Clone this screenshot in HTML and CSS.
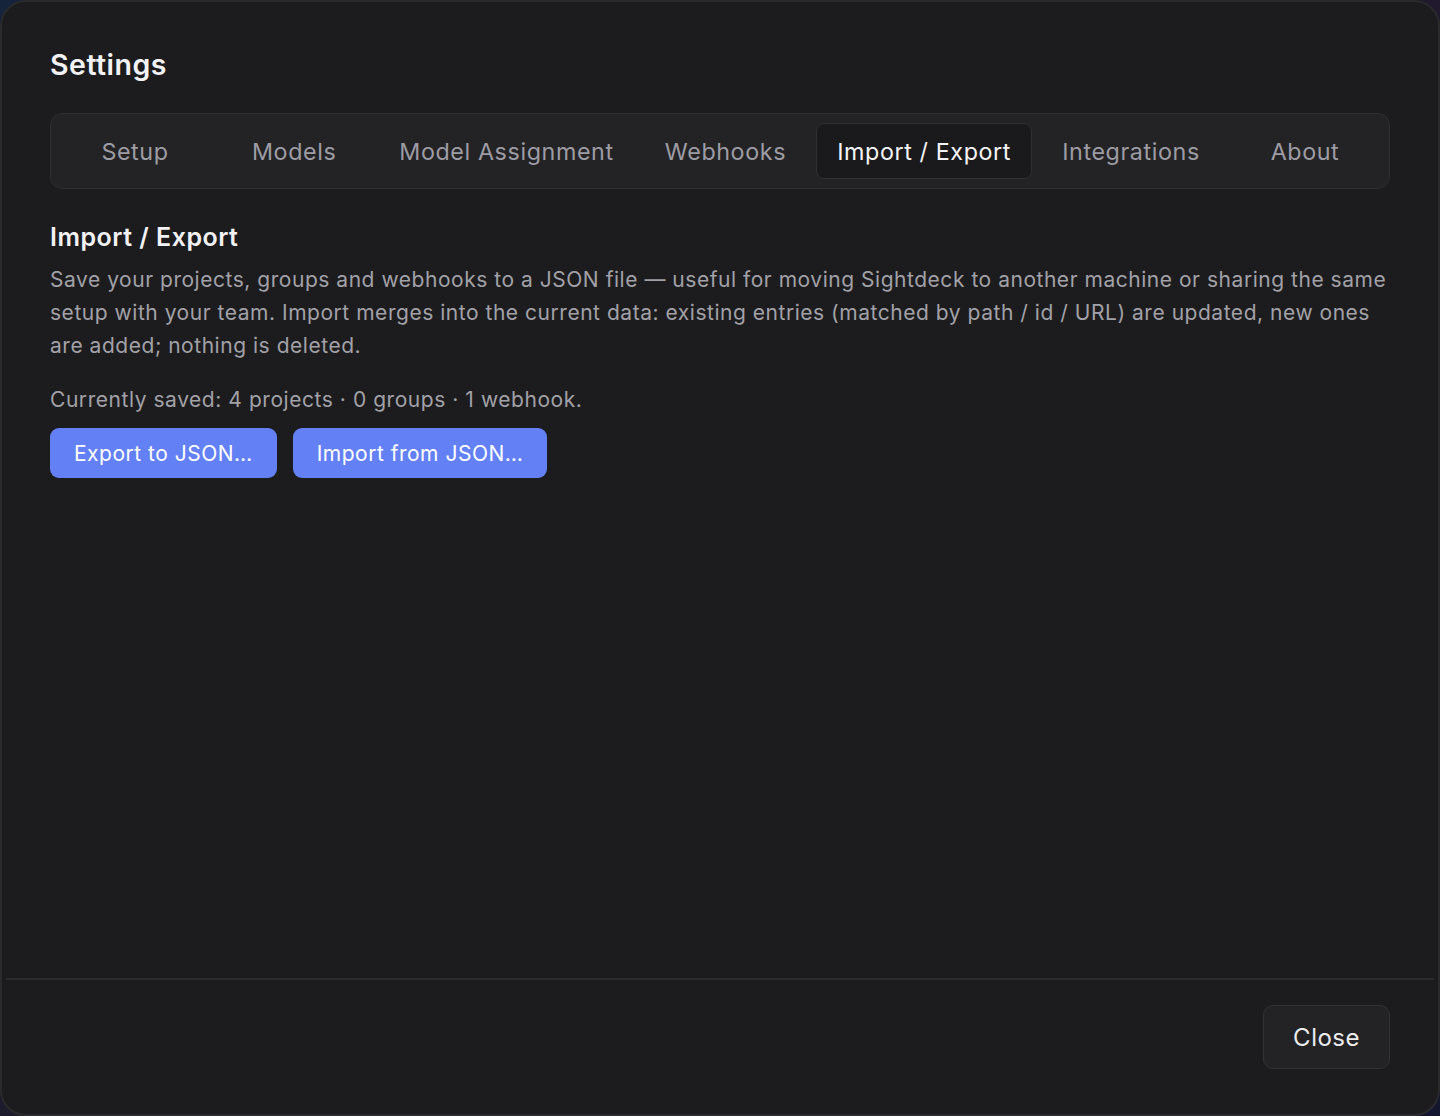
FILE: index.html
```html
<!DOCTYPE html>
<html>
<head>
  <meta charset="UTF-8" />
  <title>Settings</title>
  <link rel="stylesheet" href="styles.css">
</head>
<body>

<div class="modal">
  <div class="modal-body">
    <h2 class="title">Settings</h2>

    <div class="tabs">
      <button class="tab">Setup</button>
      <button class="tab">Models</button>
      <button class="tab">Model Assignment</button>
      <button class="tab">Webhooks</button>
      <button class="tab active">Import / Export</button>
      <button class="tab">Integrations</button>
      <button class="tab">About</button>
    </div>

    <div class="section">
      <h3>Import / Export</h3>
      <p class="desc">Save your projects, groups and webhooks to a JSON file — useful for moving Sightdeck to another machine or sharing the same setup with your team. Import merges into the current data: existing entries (matched by path / id / URL) are updated, new ones are added; nothing is deleted.</p>
      <p class="counts">Currently saved: 4 projects · 0 groups · 1 webhook.</p>
      <div class="actions">
        <button class="btn-primary">Export to JSON…</button>
        <button class="btn-primary">Import from JSON…</button>
      </div>
    </div>
  </div>

  <div class="modal-footer">
    <button class="btn-close">Close</button>
  </div>
</div>

</body>
</html>
```

FILE: styles.css
```css
html, body { height: 100%; }
body {
  margin: 0;
  font-family: Inter, "Noto Sans", sans-serif;
  letter-spacing: 0.5px;
  background: linear-gradient(135deg, #15243b 0%, #1e1a2a 50%, #2a1838 75%, #141630 100%);
  color: #ececee;
}
button { font-family: inherit; letter-spacing: inherit; cursor: pointer; }

.modal {
  box-sizing: border-box;
  height: 100vh;
  display: flex;
  flex-direction: column;
  background: #1c1c1e;
  border: 2px solid #2a2a2d;
  border-radius: 26px;
  overflow: hidden;
}
.modal-body { flex: 1; padding: 46px 48px 0; }

.title { margin: 0 0 31px; font-size: 28.5px; font-weight: 600; line-height: 34px; color: #f2f2f4; }

.tabs {
  display: flex;
  justify-content: space-between;
  gap: 8px;
  padding: 9px;
  background: #232325;
  border: 1px solid #2f2f32;
  border-radius: 12px;
}
.tab {
  flex: 0 0 auto;
  min-width: 150px;
  height: 56px;
  padding: 0 20px;
  background: none;
  border: 1px solid transparent;
  border-radius: 8px;
  font-size: 23.3px;
  letter-spacing: 0.6px;
  white-space: nowrap;
  color: #9d9ca4;
}
.tab.active { background: #1a1a1c; border-color: #303033; color: #f4f4f6; }

.section { margin-top: 33px; }
.section h3 { margin: 0 0 11px; font-size: 25px; font-weight: 600; line-height: 30px; color: #f2f2f4; }
.desc { margin: 0; font-size: 21px; letter-spacing: 0.53px; line-height: 33px; color: #a2a1a8; }
.counts { margin: 21px 0 12px; font-size: 21px; letter-spacing: 0.55px; line-height: 33px; color: #a2a1a8; }

.actions { display: flex; gap: 16px; }
.btn-primary {
  height: 50px;
  padding: 0 24px;
  background: #6380f5;
  border: none;
  border-radius: 9px;
  font-size: 21px;
  color: #ffffff;
}

.modal-footer {
  display: flex;
  justify-content: flex-end;
  margin: 0 4px;
  padding: 25px 44px 45px;
  border-top: 2px solid #2c2c2f;
}
.btn-close {
  height: 64px;
  padding: 0 29px;
  background: #232325;
  border: 1px solid #323235;
  border-radius: 10px;
  font-size: 24px;
  color: #ececee;
}
```
